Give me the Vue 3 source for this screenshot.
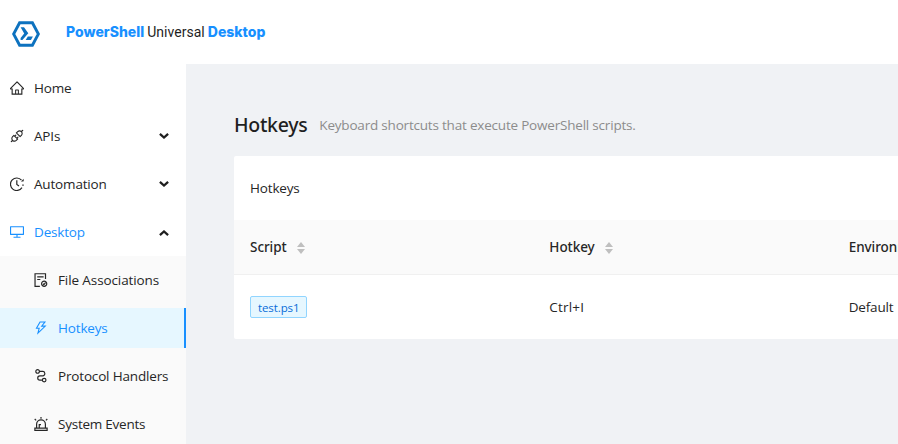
<script setup>
const icons = {
  home: { fill: 'M946.5 505L560.1 118.8l-25.9-25.9a31.5 31.5 0 00-44.4 0L77.5 505a63.9 63.9 0 00-18.8 46c.4 35.2 29.7 63.3 64.9 63.3h42.5V940h691.8V614.3h43.4c17.1 0 33.2-6.7 45.3-18.8a63.6 63.6 0 0018.7-45.3c0-17-6.7-33.1-18.8-45.2zM568 868H456V664h112v204zm217.9-325.7V868H632V640c0-22.1-17.9-40-40-40H432c-22.1 0-40 17.9-40 40v228H238.1V542.3h-96l370-369.7 23.1 23.1L882 542.3h-96.1z' },
  api: { fill: 'M917.7 148.8l-42.4-42.4c-1.6-1.6-3.6-2.3-5.7-2.3s-4.1.8-5.7 2.3l-76.1 76.1a199.27 199.27 0 00-112.1-34.3c-51.2 0-102.4 19.5-141.5 58.6L432.3 308.7a8.03 8.03 0 000 11.3L704 591.7c1.6 1.6 3.6 2.3 5.7 2.3 2 0 4.1-.8 5.7-2.3l101.9-101.9c68.9-69 77-175.7 24.3-253.5l76.1-76.1c3.1-3.2 3.1-8.3 0-11.4zM769.1 441.7l-59.4 59.4-186.8-186.8 59.4-59.4c24.9-24.9 58.1-38.7 93.4-38.7 35.3 0 68.4 13.7 93.4 38.7 24.9 24.9 38.7 58.1 38.7 93.4 0 35.3-13.8 68.4-38.7 93.4zm-190.2 105a8.03 8.03 0 00-11.3 0L501 613.3 410.7 523l66.7-66.7c3.1-3.1 3.1-8.2 0-11.3L441 408.6a8.03 8.03 0 00-11.3 0L363 475.3l-43-43a7.85 7.85 0 00-5.7-2.3c-2 0-4.1.8-5.7 2.3L206.8 534.2c-68.9 69-77 175.7-24.3 253.5l-76.1 76.1a8.03 8.03 0 000 11.3l42.4 42.4c1.6 1.6 3.6 2.3 5.7 2.3s4.1-.8 5.7-2.3l76.1-76.1c33.7 22.9 72.9 34.3 112.1 34.3 51.2 0 102.4-19.5 141.5-58.6l101.9-101.9c3.1-3.1 3.1-8.2 0-11.3l-43-43 66.7-66.7c3.1-3.1 3.1-8.2 0-11.3l-36.6-36.2zM441.7 769.1a131.32 131.32 0 01-93.2 38.7c-35.3 0-68.4-13.7-93.4-38.7a131.32 131.32 0 01-38.7-93.4c0-35.3 13.7-68.4 38.7-93.4l59.4-59.4 186.8 186.8-59.6 59.4z' },
  clock: { stroke: 'M800 270A400 400 0 1 0 830 745M500 270V545L640 640', fill: 'M770 375L945 340L930 170ZM850 540h90v90h-90z' },
  desktop: { fill: 'M928 140H96c-17.7 0-32 14.3-32 32v496c0 17.7 14.3 32 32 32h380v112H304c-8.8 0-16 7.2-16 16v48c0 4.4 3.6 8 8 8h432c4.4 0 8-3.6 8-8v-48c0-8.8-7.2-16-16-16H548V700h380c17.7 0 32-14.3 32-32V172c0-17.7-14.3-32-32-32zm-40 488H136V212h752v416z' },
  audit: { stroke: 'M440 915H130V110H800V455M270 310H680M270 480H470M550 750A165 165 0 1 0 880 750A165 165 0 1 0 550 750M640 750L700 805L800 685' },
  bolt: { fill: 'M848 359.3H627.7L825.8 109c4.1-5.3.4-13-6.3-13H436c-2.8 0-5.5 1.5-6.9 4L170 547.5c-3.1 5.3.7 12 6.9 12h174.4l-89.4 357.6c-1.9 7.8 7.5 13.3 13.3 7.7L853.5 373c5.2-4.9 1.7-13.7-5.5-13.7zM378.2 732.5l60.3-241H281.1l189.6-327.4h224.6L487 427.4h211L378.2 732.5z' },
  node: { stroke: 'M180 220A115 115 0 1 0 410 220A115 115 0 1 0 180 220M410 220H590A140 140 0 0 1 640 500H440A135 135 0 0 0 440 775H610M600 775A115 115 0 1 0 830 775A115 115 0 1 0 600 775' },
  alert: { stroke: 'M230 770V530A282 282 0 0 1 794 530V770M120 925V780H904V925ZM400 740V555H510M512 64V180M110 190L200 280M914 190L824 280' },
}
const menu = [
  { label: 'Home', icon: 'home' },
  { label: 'APIs', icon: 'api', arrow: 'down' },
  { label: 'Automation', icon: 'clock', arrow: 'down' },
  { label: 'Desktop', icon: 'desktop', arrow: 'up', active: true },
]
const submenu = [
  { label: 'File Associations', icon: 'audit', loose: true },
  { label: 'Hotkeys', icon: 'bolt', selected: true },
  { label: 'Protocol Handlers', icon: 'node' },
  { label: 'System Events', icon: 'alert', tight: true },
]
const columns = ['Script', 'Hotkey', 'Environment']
</script>

<template>
  <div class="app">
    <header class="header">
      <svg class="logo" viewBox="0 0 28 26">
        <path d="M7.6 1.8H20.4L26.4 13L20.4 24.2H7.6L1.6 13Z" fill="none" stroke="#0d72bf" stroke-width="2.9" />
        <path d="M8.6 6.2H12L16.3 12.2L10.4 19H8.6V17L12.2 12.4Z" fill="#0d72bf" />
        <path d="M15.8 15.6H20.9L18.9 18.9H13.7Z" fill="#0d72bf" />
      </svg>
      <div class="brand"><b>PowerShell</b><span>Universal</span><b>Desktop</b></div>
    </header>
    <div class="body">
      <nav class="sidebar">
        <div v-for="m in menu" :key="m.label" class="item" :class="{ active: m.active }">
          <svg class="icon" viewBox="64 64 896 896">
            <path v-if="icons[m.icon].fill" :d="icons[m.icon].fill" fill="currentColor" />
            <path v-if="icons[m.icon].stroke" :d="icons[m.icon].stroke" class="line" />
          </svg>
          <span>{{ m.label }}</span>
          <svg v-if="m.arrow" class="arrow" :class="m.arrow" viewBox="0 0 10 6">
            <path d="M0.9 0.9L5 4.5L9.1 0.9" />
          </svg>
        </div>
        <div class="submenu">
          <div v-for="s in submenu" :key="s.label" class="item" :class="{ selected: s.selected }">
            <svg class="icon" viewBox="64 64 896 896">
              <path v-if="icons[s.icon].fill" :d="icons[s.icon].fill" fill="currentColor" />
              <path v-if="icons[s.icon].stroke" :d="icons[s.icon].stroke" class="line" />
            </svg>
            <span :class="{ tight: s.tight, loose: s.loose }">{{ s.label }}</span>
          </div>
        </div>
      </nav>
      <main class="content">
        <div class="heading">
          <h1>Hotkeys</h1>
          <span class="subtitle">Keyboard shortcuts that execute PowerShell scripts.</span>
        </div>
        <section class="card">
          <div class="card-title">Hotkeys</div>
          <div class="row head">
            <div v-for="h in columns" :key="h" class="cell">
              <span>{{ h }}</span>
              <svg class="sorter" viewBox="0 0 8 12">
                <path d="M4 0L8 5H0ZM4 12L8 7H0Z" fill="#bfbfbf" />
              </svg>
            </div>
          </div>
          <div class="row">
            <div class="cell"><span class="tag">test.ps1</span></div>
            <div class="cell"><span class="keys">Ctrl+I</span></div>
            <div class="cell"><span>Default</span></div>
          </div>
        </section>
      </main>
    </div>
  </div>
</template>

<style>
body { margin: 0; overflow: hidden; }
</style>

<style scoped>
.app {
  width: 100vw;
  height: 100vh;
  display: flex;
  flex-direction: column;
  overflow: hidden;
  background: #fff;
  color: #262626;
  font: 13.5px/22px "Open Sans", "Noto Sans", sans-serif;
  letter-spacing: -0.17px;
  white-space: nowrap;
}
.header { height: 64px; flex: none; display: flex; align-items: center; padding-left: 12px; gap: 26px; box-sizing: border-box; }
.logo { width: 28px; height: 26px; margin-top: 3px; }
.brand { display: flex; gap: 3px; font-family: Inter, sans-serif; font-size: 14px; letter-spacing: 0; color: #1f1f1f; }
.brand b { color: #1890ff; font-weight: 800; }
.brand span { font-family: Roboto, sans-serif; letter-spacing: 0.03px; }
.body { flex: 1; display: flex; min-height: 0; }
.sidebar { width: 186px; flex: none; overflow: hidden; }
.item { height: 40px; margin: 4px 0 8px; padding: 0 17px 0 10px; box-sizing: border-box; display: flex; align-items: center; }
.item:nth-child(4) { margin-bottom: 4px; }
.icon { width: 14px; height: 14px; flex: none; margin-right: 10px; }
.line { fill: none; stroke: currentColor; stroke-width: 76; }
.arrow { width: 10px; height: 6px; margin-left: auto; margin-top: -1px; }
.arrow path { fill: none; stroke: #1f1f1f; stroke-width: 2.3; }
.up { transform: rotate(180deg); margin-top: 1px; }
.active { color: #1890ff; }
.submenu { background: #fafafa; padding-top: 4px; height: 200px; }
.submenu .item { margin: 0 0 8px; padding-left: 34px; }
.submenu .selected { background: #e6f7ff; color: #1890ff; border-right: 2px solid #1890ff; }
.loose { letter-spacing: -0.1px; }
.tight { letter-spacing: -0.24px; }
.content { flex: 1; min-width: 0; background: #f0f2f5; padding: 45px 0 0 48px; overflow: hidden; }
.heading { height: 32px; display: flex; align-items: center; gap: 12px; margin-bottom: 15px; }
h1 { margin: 0; font-family: "Noto Sans", sans-serif; font-size: 19.5px; font-weight: 500; line-height: 32px; color: #1f1f1f; letter-spacing: -0.3px; }
.subtitle { color: #8c8c8c; letter-spacing: -0.2px; }
.card { width: 898px; background: #fff; border-radius: 2px; }
.card-title { height: 64px; line-height: 64px; padding-left: 16px; }
.row { display: grid; grid-template-columns: repeat(3, 299.33px); height: 64px; }
.head { height: 54px; background: #fafafa; border-bottom: 1px solid #f0f0f0; font-family: "Noto Sans", sans-serif; font-weight: 500; letter-spacing: -0.05px; }
.cell { display: flex; align-items: center; padding-left: 16px; }
.sorter { width: 8px; height: 12px; margin-left: 10px; margin-top: 1px; }
.keys { letter-spacing: 0.2px; }
.tag { height: 22px; line-height: 21px; box-sizing: border-box; padding: 0 7px; font-size: 11.5px; color: #096dd9; background: #e6f7ff; border: 1px solid #91d5ff; border-radius: 2px; letter-spacing: -0.1px; }
</style>
